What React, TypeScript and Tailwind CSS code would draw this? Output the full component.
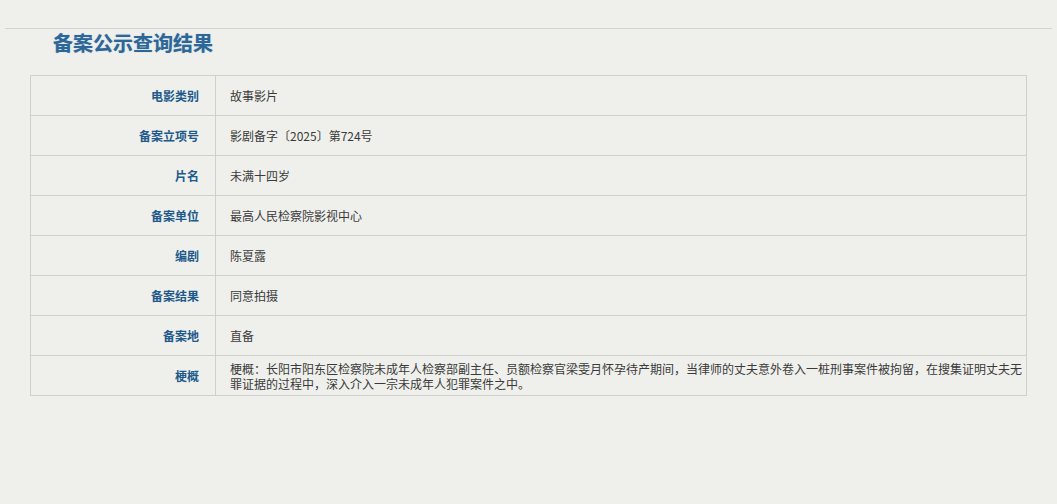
import React from "react";

const rows: { label: string; value: string }[] = [
  { label: "电影类别", value: "故事影片" },
  { label: "备案立项号", value: "影剧备字〔2025〕第724号" },
  { label: "片名", value: "未满十四岁" },
  { label: "备案单位", value: "最高人民检察院影视中心" },
  { label: "编剧", value: "陈夏露" },
  { label: "备案结果", value: "同意拍摄" },
  { label: "备案地", value: "直备" },
  {
    label: "梗概",
    value:
      "梗概：长阳市阳东区检察院未成年人检察部副主任、员额检察官梁雯月怀孕待产期间，当律师的丈夫意外卷入一桩刑事案件被拘留，在搜集证明丈夫无罪证据的过程中，深入介入一宗未成年人犯罪案件之中。",
  },
];

export default function App() {
  return (
    <div
      className="w-[1057px] h-[504px] bg-[#eff0ec] overflow-hidden"
      style={{ fontFamily: '"Noto Sans CJK SC", "Noto Sans", sans-serif' }}
    >
      <div className="pt-[28px] px-[5px]">
        <div className="border-t border-[#d3d4cf]" />
      </div>
      <h1 className="ml-[53px] mt-0 h-[28px] text-[20px] leading-[28px] font-bold text-[#2d6699] [text-shadow:0_0_1px_rgba(45,102,153,0.5)]">
        备案公示查询结果
      </h1>
      <div className="ml-[30px] mt-[18px] w-[997px] border border-[#cfd0cb] border-b-0">
        {rows.map((r) => (
          <div key={r.label} className="flex h-[40px] border-b border-[#cfd0cb]">
            <div className="w-[185px] shrink-0 border-r border-[#cfd0cb] flex items-center justify-end pr-[16px] text-[12px] text-[#21598b] font-semibold">
              {r.label}
            </div>
            <div className="flex-1 flex items-center pl-[14px] pr-0 text-[12px] leading-[15px] text-[#3a3a3a]">
              {r.value}
            </div>
          </div>
        ))}
      </div>
    </div>
  );
}
